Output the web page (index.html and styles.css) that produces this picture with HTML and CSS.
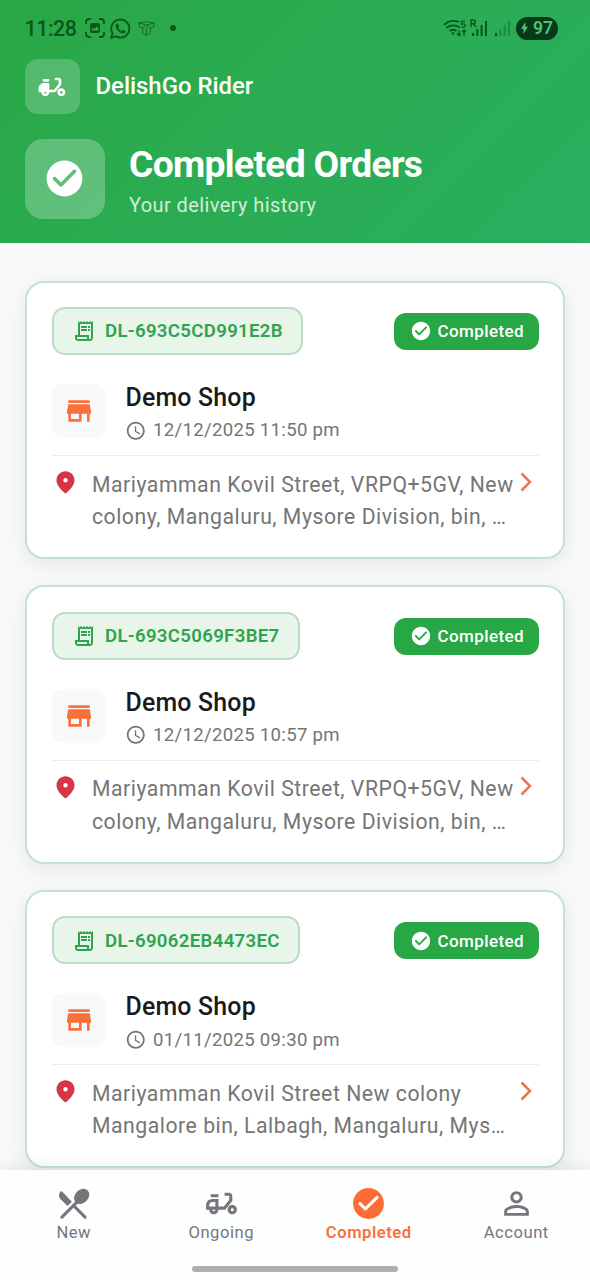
FILE: index.html
```html
<!DOCTYPE html>
<html lang="en">
<head>
<meta charset="utf-8">
<title>DelishGo Rider</title>
<link rel="stylesheet" href="styles.css">
</head>
<body>
<svg class="defs" width="0" height="0" aria-hidden="true">
  <symbol id="check" viewBox="0 0 24 24"><path d="M12 2C6.48 2 2 6.48 2 12s4.48 10 10 10 10-4.48 10-10S17.52 2 12 2zM9.29 16.29L5.7 12.7c-.39-.39-.39-1.02 0-1.41.39-.39 1.02-.39 1.41 0L10 14.17l6.88-6.88c.39-.39 1.02-.39 1.41 0 .39.39.39 1.02 0 1.41l-7.59 7.59c-.38.39-1.02.39-1.41 0z"/></symbol>
  <symbol id="scooter" viewBox="0 0 24 24"><path fill-rule="evenodd" d="M19 7c0-1.1-.9-2-2-2h-2c-.55 0-1 .45-1 1s.45 1 1 1h2v2.65L13.52 14H10v-4c0-.55-.45-1-1-1H6c-2.21 0-4 1.79-4 4v2c0 .55.45 1 1 1h1c0 1.66 1.34 3 3 3s3-1.34 3-3h3.52c.61 0 1.18-.28 1.56-.75l3.48-4.35c.28-.35.44-.79.44-1.25V7zM7 17c-.55 0-1-.45-1-1h2c0 .55-.45 1-1 1zM6 6h3c.55 0 1 .45 1 1s-.45 1-1 1H6c-.55 0-1-.45-1-1s.45-1 1-1zM19 13c-1.66 0-3 1.34-3 3s1.34 3 3 3 3-1.34 3-3-1.34-3-3-3zm0 4c-.55 0-1-.45-1-1s.45-1 1-1 1 .45 1 1-.45 1-1 1z"/></symbol>
  <symbol id="scooter-line" viewBox="0 0 24 24"><path fill-rule="evenodd" d="M19 7c0-1.1-.9-2-2-2h-3v2h3v2.65L13.52 14H10V9H6c-2.21 0-4 1.79-4 4v3h2c0 1.66 1.34 3 3 3s3-1.34 3-3h4.48L19 10.35V7zM4 14v-1c0-1.1.9-2 2-2h2v3H4zm3 3c-.55 0-1-.45-1-1h2c0 .55-.45 1-1 1zM5 6h5v2H5zM19 13c-1.66 0-3 1.34-3 3s1.34 3 3 3 3-1.34 3-3-1.34-3-3-3zm0 4c-.55 0-1-.45-1-1s.45-1 1-1 1 .45 1 1-.45 1-1 1z"/></symbol>
  <symbol id="receipt" viewBox="0 0 24 24"><path d="M19.5 3.5L18 2l-1.5 1.5L15 2l-1.5 1.5L12 2l-1.5 1.5L9 2 7.5 3.5 6 2v14H3v3c0 1.66 1.34 3 3 3h12c1.66 0 3-1.34 3-3V2l-1.5 1.5zM15 20H6c-.55 0-1-.45-1-1v-1h10v2zm4-1c0 .55-.45 1-1 1s-1-.45-1-1v-3H8V5h11v14zM9 7h6v2H9zM16 7h2v2h-2zM9 10h6v2H9zM16 10h2v2h-2z"/></symbol>
  <symbol id="store" viewBox="0 0 24 24"><path d="M20 4H4v2h16V4zm1 10v-2l-1-5H4l-1 5v2h1v6h10v-6h4v6h2v-6h1zm-9 4H6v-4h6v4z"/></symbol>
  <symbol id="clock" viewBox="0 0 24 24"><path d="M11.99 2C6.47 2 2 6.48 2 12s4.47 10 9.99 10C17.52 22 22 17.52 22 12S17.52 2 11.99 2zM12 20c-4.42 0-8-3.58-8-8s3.58-8 8-8 8 3.58 8 8-3.58 8-8 8zm.5-13H11v6l5.25 3.15.75-1.23-4.5-2.67z"/></symbol>
  <symbol id="pin" viewBox="0 0 24 24"><path d="M12 2C7.8 2 4 5.22 4 10.2c0 3.18 2.45 6.92 7.34 11.23.38.33.95.33 1.33 0C17.55 17.12 20 13.38 20 10.2 20 5.22 16.2 2 12 2zm0 10c-1.1 0-2-.9-2-2s.9-2 2-2 2 .9 2 2-.9 2-2 2z"/></symbol>
  <symbol id="chevron" viewBox="0 0 12 20"><path d="M1.5 1.5L10 10l-8.5 8.5" fill="none" stroke="currentColor" stroke-width="2.5"/></symbol>
  <symbol id="person" viewBox="0 0 24 24"><path d="M12 5.9c1.16 0 2.1.94 2.1 2.1s-.94 2.1-2.1 2.1S9.9 9.16 9.9 8s.94-2.1 2.1-2.1m0 9c2.97 0 6.1 1.46 6.1 2.1v1.1H5.9V17c0-.64 3.13-2.1 6.1-2.1M12 4C9.79 4 8 5.79 8 8s1.79 4 4 4 4-1.79 4-4-1.79-4-4-4zm0 9c-2.67 0-8 1.34-8 4v3h16v-3c0-2.66-5.33-4-8-4z"/></symbol>
  <symbol id="menu" viewBox="0 0 24 24"><path d="M8.1 13.7l2.83-2.83-6.19-6.5c-.42-.42-1.12-.38-1.46.11-1.03 1.45-.89 3.47.4 4.76l4.42 4.46z"/><ellipse cx="17.3" cy="7.4" rx="5.5" ry="4.3" transform="rotate(-45 17.3 7.4)"/><path d="M14.5 10.8L4.5 20.8M12 13.300l7.500 7.500" fill="none" stroke="currentColor" stroke-width="2" stroke-linecap="round"/></symbol>
</svg>

<header class="header">
  <div class="statusbar">
    <span class="time">11:28</span>
    <svg class="sb-shot" viewBox="0 0 20 20"><path d="M1 6V4a3 3 0 0 1 3-3h2M14 1h2a3 3 0 0 1 3 3v2M19 14v2a3 3 0 0 1-3 3h-2M6 19H4a3 3 0 0 1-3-3v-2" fill="none" stroke="currentColor" stroke-width="1.8"/><path fill="currentColor" fill-rule="evenodd" d="M7 5h6a2 2 0 0 1 2 2v6a2 2 0 0 1-2 2H7a2 2 0 0 1-2-2V7a2 2 0 0 1 2-2zM6.500 12.500h7V10l-2-1.500L9.500 11 8 9.800l-1.500 1.500z"/></svg>
    <svg class="sb-chat" viewBox="0 0 20 20"><path d="M1.200 18.800l1.200-4.500a8.600 8.600 0 1 1 3.200 3.200z" fill="none" stroke="currentColor" stroke-width="1.700"/><path fill="currentColor" d="M7 5.200c-.8 0-1.700 1-1.600 2.300.3 3.500 4 7 7.200 7.100 1.400 0 2.300-1 2.300-2l-2.400-1.400-1.300 1.300c-1.400-.5-2.900-1.900-3.500-3.300l1-1.200-1-2.700z"/></svg>
    <svg class="sb-box" viewBox="0 0 18 16"><path d="M1 2l8-1 8 1-.5 4.500-3.500 1V13l-4 2.500L5 13V7.500L1.500 6.500zM1 2l8 2.500L17 2M5 7.500L9 4.500l4 3M9 7.500v8" fill="none" stroke="currentColor" stroke-width=".9"/></svg>
    <span class="sb-dot"></span>
    <svg class="sb-wifi" viewBox="0 0 24 18"><path d="M1 6a14 14 0 0 1 15-3M3.500 9a10 10 0 0 1 13-.5M6.500 12a6 6 0 0 1 7 0" fill="none" stroke="currentColor" stroke-width="1.800"/><path fill="currentColor" d="M8 13.500h4l-2 3z"/><path d="M22 2.300h-3.500v3c2-1 3.700-.3 3.700 1.300s-2.300 2.300-3.900 1.200M16 11v5.500m-2-2l2 2 2-2M21 17v-6m-2 2l2-2 2 2" fill="none" stroke="currentColor" stroke-width="1.300"/></svg>
    <svg class="sb-signal" viewBox="0 0 18 18"><path d="M1 8V1h2.500a1.800 1.800 0 0 1 0 3.700H1M3.500 4.700L6 8" fill="none" stroke="currentColor" stroke-width="1.400"/><path fill="currentColor" d="M2 14h2v3H2zM6.300 10h2v7h-2zM10.600 6h2v11h-2zM15 2h2v15h-2z"/></svg>
    <svg class="sb-signal2" viewBox="0 0 18 18"><path fill="currentColor" d="M2 14h2v3H2z"/><path fill="currentColor" opacity=".4" d="M6.300 10h2v7h-2zM10.600 6h2v11h-2zM15 2h2v15h-2z"/></svg>
    <span class="battery"><svg viewBox="0 0 10 14"><path fill="currentColor" d="M6 0L1 8h3L3.500 14 9 5.500H6z"/></svg>97</span>
  </div>
  <div class="brand">
    <span class="brand-icon"><svg><use href="#scooter"/></svg></span>
    <span class="brand-name">DelishGo Rider</span>
  </div>
  <div class="hero">
    <span class="hero-icon"><svg><use href="#check"/></svg></span>
    <div class="hero-text">
      <h1>Completed Orders</h1>
      <p>Your delivery history</p>
    </div>
  </div>
</header>

<main class="orders">
  <article class="card">
    <div class="card-top">
      <span class="order-id"><svg><use href="#receipt"/></svg><span>DL-693C5CD991E2B</span></span>
      <span class="status"><svg><use href="#check"/></svg>Completed</span>
    </div>
    <div class="shop">
      <span class="shop-icon"><svg><use href="#store"/></svg></span>
      <div><h2>Demo Shop</h2><p class="when"><svg><use href="#clock"/></svg>12/12/2025 11:50 pm</p></div>
    </div>
    <div class="address">
      <svg class="pin"><use href="#pin"/></svg>
      <p>Mariyamman Kovil Street, VRPQ+5GV, New<br>colony, Mangaluru, Mysore Division, bin, …</p>
      <svg class="chevron"><use href="#chevron"/></svg>
    </div>
  </article>
  <article class="card">
    <div class="card-top">
      <span class="order-id"><svg><use href="#receipt"/></svg><span>DL-693C5069F3BE7</span></span>
      <span class="status"><svg><use href="#check"/></svg>Completed</span>
    </div>
    <div class="shop">
      <span class="shop-icon"><svg><use href="#store"/></svg></span>
      <div><h2>Demo Shop</h2><p class="when"><svg><use href="#clock"/></svg>12/12/2025 10:57 pm</p></div>
    </div>
    <div class="address">
      <svg class="pin"><use href="#pin"/></svg>
      <p>Mariyamman Kovil Street, VRPQ+5GV, New<br>colony, Mangaluru, Mysore Division, bin, …</p>
      <svg class="chevron"><use href="#chevron"/></svg>
    </div>
  </article>
  <article class="card">
    <div class="card-top">
      <span class="order-id"><svg><use href="#receipt"/></svg><span>DL-69062EB4473EC</span></span>
      <span class="status"><svg><use href="#check"/></svg>Completed</span>
    </div>
    <div class="shop">
      <span class="shop-icon"><svg><use href="#store"/></svg></span>
      <div><h2>Demo Shop</h2><p class="when"><svg><use href="#clock"/></svg>01/11/2025 09:30 pm</p></div>
    </div>
    <div class="address">
      <svg class="pin"><use href="#pin"/></svg>
      <p>Mariyamman Kovil Street New colony<br>Mangalore bin, Lalbagh, Mangaluru, Mys…</p>
      <svg class="chevron"><use href="#chevron"/></svg>
    </div>
  </article>
</main>

<nav class="nav">
  <div class="tabs">
    <a class="tab"><svg><use href="#menu"/></svg><span>New</span></a>
    <a class="tab"><svg><use href="#scooter-line"/></svg><span>Ongoing</span></a>
    <a class="tab active"><svg><use href="#check"/></svg><span>Completed</span></a>
    <a class="tab"><svg><use href="#person"/></svg><span>Account</span></a>
  </div>
  <span class="home-bar"></span>
</nav>
</body>
</html>
```
FILE: styles.css
```css
* { box-sizing: border-box; margin: 0; padding: 0; }
html, body { height: 100%; }
body {
  display: flex;
  flex-direction: column;
  overflow: hidden;
  background: #f8f9fb;
  font-family: Roboto, sans-serif;
  color: #757575;
}
svg { flex: none; display: block; fill: currentColor; }
.defs { position: absolute; }

/* Header */
.header {
  flex: none;
  height: 243px;
  padding: 0 24.5px;
  background: linear-gradient(135deg, #28a745 0%, #2bac52 45%, #2aae5f 100%);
  color: #fff;
}
.statusbar {
  display: flex;
  align-items: center;
  height: 59px;
  padding-bottom: 3px;
  margin-right: 8px;
  color: #0a5719;
}
.time { width: 60px; font-size: 21.5px; font-weight: 500; letter-spacing: -.5px; }
.sb-shot { width: 20px; height: 20px; }
.sb-chat { width: 21px; height: 21px; margin-left: 5px; }
.sb-box { width: 17px; height: 17px; margin-left: 7px; opacity: .85; }
.sb-dot { width: 6px; height: 6px; margin-left: 15px; border-radius: 50%; background: currentColor; }
.sb-wifi { width: 24px; height: 18px; margin-left: auto; }
.sb-signal { width: 18px; height: 18px; margin-left: 3px; }
.sb-signal2 { width: 18px; height: 18px; margin-left: 5px; }
.battery {
  display: flex;
  align-items: center;
  justify-content: center;
  gap: 4px;
  width: 42px;
  height: 23px;
  margin-left: 5px;
  border-radius: 12px;
  background: #07391a;
  color: #4cc571;
  font-size: 17.5px;
  font-weight: 600;
}
.battery svg { width: 9px; height: 12px; }
.brand { display: flex; align-items: center; gap: 16px; height: 55px; }
.brand-icon, .hero-icon {
  display: grid;
  place-items: center;
  flex: none;
  width: 55px;
  height: 55px;
  border-radius: 13px;
  background: rgba(255, 255, 255, .2);
}
.brand-icon svg { width: 32px; height: 32px; }
.brand-name { margin-top: -2px; font-size: 23.9px; font-weight: 500; }
.hero { display: flex; gap: 24.5px; margin-top: 24.5px; }
.hero-icon { width: 80px; height: 80px; border-radius: 18px; background: rgba(255, 255, 255, .25); }
.hero-icon svg { width: 43px; height: 43px; }
.hero h1 { margin-top: 3.5px; font-size: 37.2px; line-height: 45px; font-weight: 700; letter-spacing: -.66px; }
.hero p { margin-top: 6px; font-size: 20px; line-height: 25px; letter-spacing: .4px; color: rgba(255, 255, 255, .8); }

/* Orders */
.orders {
  flex: 1;
  min-height: 0;
  display: flex;
  flex-direction: column;
  gap: 26px;
  padding: 37.6px 25px 0;
}
.card {
  flex: none;
  height: 278.6px;
  padding: 24.4px 24.5px;
  border: 2px solid #c4e2d0;
  border-radius: 19px;
  background: #fefffe;
  box-shadow: 0 5px 20px rgba(0, 0, 0, .08);
}
.card-top { display: flex; align-items: center; justify-content: space-between; height: 48px; }
.order-id {
  display: flex;
  align-items: center;
  height: 48px;
  padding: 1px 18.5px 0 18px;
  border: 2px solid #bcdcc7;
  border-radius: 13px;
  background: #e8f5e9;
  color: #31a350;
  font-size: 18.6px;
  font-weight: 600;
  letter-spacing: .33px;
}
.order-id svg { width: 24px; height: 24px; margin-right: 9.5px; }
.status {
  display: flex;
  align-items: center;
  gap: 6px;
  width: 144.5px;
  height: 37px;
  margin-top: 1px;
  padding-left: 15.5px;
  border-radius: 12px;
  background: #28a745;
  color: #fff;
  font-size: 17px;
  font-weight: 500;
  letter-spacing: .4px;
}
.status svg { width: 22px; height: 22px; }
.shop { display: flex; gap: 20px; margin-top: 29px; height: 72px; border-bottom: 1.5px solid #eaedee; }
.shop-icon {
  display: grid;
  place-items: center;
  width: 54px;
  height: 54px;
  border-radius: 11px;
  background: #f8f9fa;
  color: #f9703b;
}
.shop-icon svg { width: 32px; height: 32px; }
.shop h2 { font-size: 24.9px; line-height: 27px; font-weight: 500; letter-spacing: .2px; color: #1a1a1a; }
.when { display: flex; align-items: center; gap: 6.5px; margin: 7.5px 0 0 -.5px; font-size: 18.6px; line-height: 24px; letter-spacing: .3px; }
.when svg { width: 21.5px; height: 21.5px; }
.address { display: flex; margin-top: 12.8px; font-size: 21.2px; line-height: 32.5px; letter-spacing: .54px; }
.address p { flex: none; width: 428px; white-space: nowrap; }
.pin { width: 27px; height: 27px; margin: .5px 13.4px 0 0; color: #d63447; }
.chevron { width: 12px; height: 20px; margin-top: 3px; color: #ec7545; }

/* Bottom navigation */
.nav {
  position: relative;
  flex: none;
  height: 110px;
  padding-top: 14.5px;
  background: #fdfefe;
  box-shadow: 0 -3px 16px rgba(0, 0, 0, .08);
}
.tabs { display: flex; }
.tab { flex: 1; display: flex; flex-direction: column; align-items: center; font-size: 16.6px; line-height: 20px; letter-spacing: .53px; color: #75767b; }
.tab svg { width: 37px; height: 37px; margin-bottom: 1.5px; }
.active { color: #f9703b; font-weight: 600; }
.active svg { color: #ff6b35; }
.home-bar { display: block; width: 206px; height: 6px; margin: 23px auto 0; border-radius: 3px; background: #aeafae; }
```
